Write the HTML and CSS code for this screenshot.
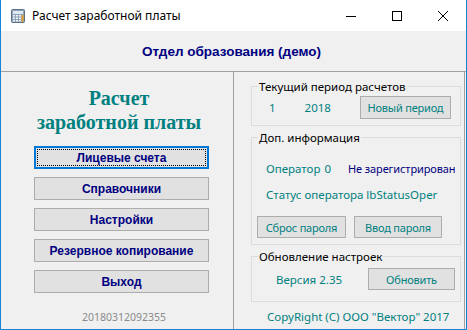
FILE: index.html
```html
<!DOCTYPE html>
<html lang="ru">
  <head>
    <meta charset="UTF-8" />
    <title>Расчет заработной платы</title>
    <link rel="stylesheet" href="styles.css">
  </head>
  <body>
    <div class="window">
      <div class="titlebar">
        <svg class="app-icon" width="14" height="14" viewBox="0 0 14 14">
          <rect x="0.5" y="0.5" width="13" height="13" rx="1" fill="#8fa3b8" stroke="#5d7186" />
          <rect x="2" y="2" width="10" height="3" fill="#dfe8f0" />
          <rect x="10.5" y="6" width="2" height="6.5" fill="#e8a02a" />
          <g fill="#eef3f7">
            <rect x="2" y="6" width="2" height="1.5" />
            <rect x="5" y="6" width="2" height="1.5" />
            <rect x="8" y="6" width="2" height="1.5" />
            <rect x="2" y="8.5" width="2" height="1.5" />
            <rect x="5" y="8.5" width="2" height="1.5" />
            <rect x="8" y="8.5" width="2" height="1.5" />
            <rect x="2" y="11" width="2" height="1.5" />
            <rect x="5" y="11" width="2" height="1.5" />
            <rect x="8" y="11" width="2" height="1.5" />
          </g>
        </svg>
        <span class="title">Расчет заработной платы</span>
        <div class="controls">
          <span class="ctl">
            <svg width="10" height="10" viewBox="0 0 10 10"><path d="M0 5.5H10" stroke="#000" /></svg>
          </span>
          <span class="ctl">
            <svg width="10" height="10" viewBox="0 0 10 10"><rect x="0.5" y="0.5" width="9" height="9" fill="none" stroke="#000" /></svg>
          </span>
          <span class="ctl">
            <svg width="10" height="10" viewBox="0 0 10 10"><path d="M0 0L10 10M10 0L0 10" stroke="#000" /></svg>
          </span>
        </div>
      </div>

      <div class="header">Отдел образования (демо)</div>

      <div class="main">
        <div class="left">
          <div class="app-name">Расчет<br />заработной платы</div>
          <div class="menu">
            <button class="menu-btn focused">Лицевые счета</button>
            <button class="menu-btn">Справочники</button>
            <button class="menu-btn">Настройки</button>
            <button class="menu-btn">Резервное копирование</button>
            <button class="menu-btn">Выход</button>
          </div>
          <div class="build">20180312092355</div>
        </div>

        <div class="right">
          <fieldset class="group">
            <legend>Текущий период расчетов</legend>
            <div class="period">
              <span class="val month">1</span>
              <span class="val year">2018</span>
              <button class="btn btn-period">Новый период</button>
            </div>
          </fieldset>

          <fieldset class="group">
            <legend>Доп. информация</legend>
            <div class="info">
              <div class="info-row">
                <span class="val">Оператор</span>
                <span class="val op-id">0</span>
                <span class="op-name">Не зарегистрирован</span>
              </div>
              <div class="info-row second">
                <span class="val">Статус оператора</span>
                <span class="val op-status">lbStatusOper</span>
              </div>
              <div class="pass-btns">
                <button class="btn btn-reset">Сброс пароля</button>
                <button class="btn btn-enter">Ввод пароля</button>
              </div>
            </div>
          </fieldset>

          <fieldset class="group">
            <legend>Обновление настроек</legend>
            <div class="update">
              <span class="val version">Версия 2.35</span>
              <button class="btn btn-update">Обновить</button>
            </div>
          </fieldset>

          <div class="copyright">CopyRight (C) ООО "Вектор" 2017</div>
        </div>
      </div>
    </div>
  </body>
</html>
```

FILE: styles.css
```css
:root {
  --frame: #1883d7;
  --face: #f0f0f0;
  --btn: #e1e1e1;
  --btn-border: #adadad;
  --navy: #000080;
  --teal: #008080;
  --line: #a0a0a0;
  --group: #dcdcdc;
}

* {
  box-sizing: border-box;
}

body {
  margin: 0;
  font-family: "Noto Sans", "Liberation Sans", sans-serif;
  font-size: 12px;
  color: #000;
}

.window {
  width: 467px;
  height: 330px;
  display: flex;
  flex-direction: column;
  border: 1px solid var(--frame);
  border-top: none;
  background: var(--face);
}

/* title bar */
.titlebar {
  height: 31px;
  background: #fff;
  display: flex;
  align-items: center;
}

.app-icon {
  margin-left: 10px;
  margin-top: 1px;
}

.title {
  margin-left: 7px;
  font-size: 12px;
}

.controls {
  margin-left: auto;
  display: flex;
  height: 100%;
}

.ctl {
  width: 46px;
  display: flex;
  align-items: center;
  justify-content: center;
}

.header {
  height: 41px;
  border-bottom: 1px solid var(--line);
  display: flex;
  align-items: center;
  justify-content: center;
  padding-right: 4px;
  font-family: "Liberation Sans", Arial, sans-serif;
  font-weight: bold;
  font-size: 13.5px;
  color: var(--navy);
}

.main {
  flex: 1;
  display: flex;
}

/* left side */
.left {
  width: 233px;
  border-right: 1px solid var(--line);
  display: flex;
  flex-direction: column;
  padding-left: 33px;
}

.app-name {
  width: 170px;
  margin-top: 14px;
  text-align: center;
  font-family: "Liberation Serif", serif;
  font-weight: bold;
  font-size: 20px;
  line-height: 24px;
  color: var(--teal);
}

.menu {
  margin-top: 12px;
  display: flex;
  flex-direction: column;
  gap: 8px;
}

.menu-btn {
  width: 175px;
  height: 23px;
  padding: 0;
  background: var(--btn);
  border: 1px solid var(--btn-border);
  font-family: "Liberation Sans", Arial, sans-serif;
  font-weight: bold;
  font-size: 12px;
  color: var(--navy);
}

.menu-btn.focused {
  border: 2px solid #0078d7;
  outline: 1px dotted #000;
  outline-offset: -4px;
}

.build {
  width: 175px;
  margin-top: 18px;
  padding-left: 5px;
  text-align: center;
  font-size: 10.5px;
  line-height: 13px;
  color: #8a8a8a;
}

/* right side */
.right {
  flex: 1;
  margin-right: 1px;
  border-right: 1px solid var(--line);
  padding: 7px 3px 0 17px;
  display: flex;
  flex-direction: column;
  font-size: 11.5px;
}

.group {
  margin: 0 0 4px;
  padding: 0;
  min-width: 0;
  border: 1px solid var(--group);
}

.group legend {
  margin-left: 6px;
  padding: 0 1px;
  line-height: 15px;
}

.btn {
  height: 23px;
  padding: 0;
  background: var(--btn);
  border: 1px solid var(--btn-border);
  font-family: "Noto Sans", "Liberation Sans", sans-serif;
  font-size: 11px;
  letter-spacing: -0.2px;
  color: var(--teal);
}

.val {
  color: var(--teal);
  white-space: nowrap;
}

.period {
  display: flex;
  align-items: center;
  padding: 2px 0 6px 17px;
}

.year {
  margin-left: 29px;
}

.btn-period {
  width: 91px;
  margin-left: 29px;
}

.info {
  padding: 16px 0 6px 14px;
}

.info-row {
  display: flex;
  align-items: baseline;
  line-height: 15px;
}

.info-row.second {
  margin-top: 11px;
}

.op-id {
  margin-left: 4px;
}

.op-name {
  margin-left: 17px;
  width: 107px;
  overflow: hidden;
  white-space: nowrap;
  font-size: 11px;
  letter-spacing: -0.1px;
  color: var(--navy);
}

.op-status {
  margin-left: 3px;
}

.pass-btns {
  margin-top: 14px;
  margin-left: -9px;
  display: flex;
  gap: 8px;
}

.btn-reset {
  width: 89px;
  height: 22px;
}

.btn-enter {
  width: 88px;
  height: 22px;
}

.update {
  display: flex;
  align-items: center;
  padding: 4px 0 11px 24px;
}

.btn-update {
  width: 87px;
  height: 22px;
  margin-left: auto;
  margin-right: 5px;
}

.copyright {
  margin-top: 3px;
  margin-left: 16px;
  line-height: 15px;
  color: var(--teal);
  white-space: nowrap;
}
```
